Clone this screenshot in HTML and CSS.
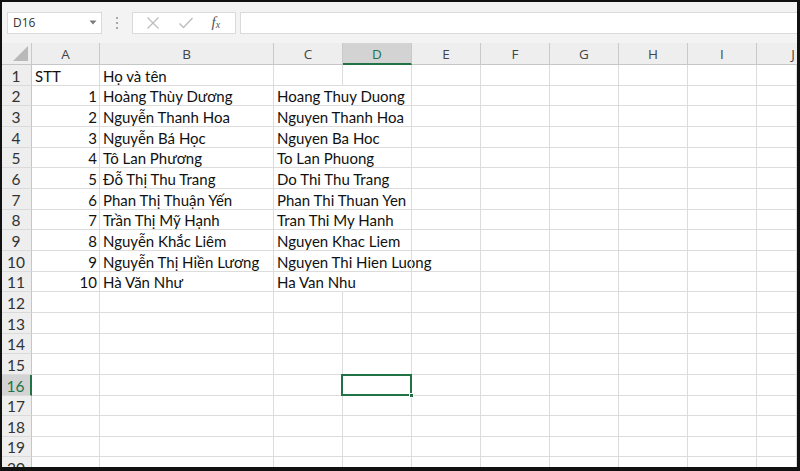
FILE: index.html
```html
<!DOCTYPE html>
<html>
<head>
<meta charset="utf-8">
<link rel="stylesheet" href="styles.css">
</head>
<body>
<div class="frame">
  <div class="fbar">
    <div class="namebox"><span>D16</span><svg class="dd" width="8" height="5" viewBox="0 0 8 5"><path d="M0.5 0.5 L7.5 0.5 L4 4.5 Z" fill="#7a7a7a"/></svg></div>
    <div class="dots"><i></i><i></i><i></i></div>
    <div class="btns">
      <svg width="14" height="14" viewBox="0 0 14 14"><path d="M1.5 1.5 L12.5 12.5 M12.5 1.5 L1.5 12.5" stroke="#bdbdbd" stroke-width="1.3" fill="none"/></svg>
      <svg width="16" height="14" viewBox="0 0 16 14"><path d="M1.5 7.5 L5.5 11.5 L14.5 2" stroke="#bdbdbd" stroke-width="1.4" fill="none"/></svg>
      <span class="fx">f<sub>x</sub></span>
    </div>
    <div class="input"></div>
  </div>
  <div class="grid">
    <div class="ch corner"><svg width="15" height="15" viewBox="0 0 15 15"><path d="M15 0 L15 15 L0 15 Z" fill="#b9b9b9"/></svg></div>
    <div class="ch">A</div><div class="ch">B</div><div class="ch">C</div><div class="ch sel">D</div><div class="ch">E</div><div class="ch">F</div><div class="ch">G</div><div class="ch">H</div><div class="ch">I</div><div class="ch last">J</div>

    <div class="rh">1</div><div class="c">STT</div><div class="c">Họ và tên</div><div class="c"></div><div class="c"></div><div class="c"></div><div class="c"></div><div class="c"></div><div class="c"></div><div class="c"></div><div class="c"></div>
    <div class="rh">2</div><div class="c n">1</div><div class="c">Hoàng Thùy Dương</div><div class="c ov">Hoang Thuy Duong</div><div class="c"></div><div class="c"></div><div class="c"></div><div class="c"></div><div class="c"></div><div class="c"></div><div class="c"></div>
    <div class="rh">3</div><div class="c n">2</div><div class="c">Nguyễn Thanh Hoa</div><div class="c ov">Nguyen Thanh Hoa</div><div class="c"></div><div class="c"></div><div class="c"></div><div class="c"></div><div class="c"></div><div class="c"></div><div class="c"></div>
    <div class="rh">4</div><div class="c n">3</div><div class="c">Nguyễn Bá Học</div><div class="c ov">Nguyen Ba Hoc</div><div class="c"></div><div class="c"></div><div class="c"></div><div class="c"></div><div class="c"></div><div class="c"></div><div class="c"></div>
    <div class="rh">5</div><div class="c n">4</div><div class="c">Tô Lan Phương</div><div class="c ov">To Lan Phuong</div><div class="c"></div><div class="c"></div><div class="c"></div><div class="c"></div><div class="c"></div><div class="c"></div><div class="c"></div>
    <div class="rh">6</div><div class="c n">5</div><div class="c">Đỗ Thị Thu Trang</div><div class="c ov">Do Thi Thu Trang</div><div class="c"></div><div class="c"></div><div class="c"></div><div class="c"></div><div class="c"></div><div class="c"></div><div class="c"></div>
    <div class="rh">7</div><div class="c n">6</div><div class="c">Phan Thị Thuận Yến</div><div class="c ov">Phan Thi Thuan Yen</div><div class="c"></div><div class="c"></div><div class="c"></div><div class="c"></div><div class="c"></div><div class="c"></div><div class="c"></div>
    <div class="rh">8</div><div class="c n">7</div><div class="c">Trần Thị Mỹ Hạnh</div><div class="c ov">Tran Thi My Hanh</div><div class="c"></div><div class="c"></div><div class="c"></div><div class="c"></div><div class="c"></div><div class="c"></div><div class="c"></div>
    <div class="rh">9</div><div class="c n">8</div><div class="c">Nguyễn Khắc Liêm</div><div class="c ov">Nguyen Khac Liem</div><div class="c"></div><div class="c"></div><div class="c"></div><div class="c"></div><div class="c"></div><div class="c"></div><div class="c"></div>
    <div class="rh">10</div><div class="c n">9</div><div class="c">Nguyễn Thị Hiền Lương</div><div class="c ov">Nguyen Thi Hien Luong</div><div class="c"></div><div class="c"></div><div class="c"></div><div class="c"></div><div class="c"></div><div class="c"></div><div class="c"></div>
    <div class="rh">11</div><div class="c n">10</div><div class="c">Hà Văn Như</div><div class="c ov">Ha Van Nhu</div><div class="c"></div><div class="c"></div><div class="c"></div><div class="c"></div><div class="c"></div><div class="c"></div><div class="c"></div>
    <div class="rh">12</div><div class="c"></div><div class="c"></div><div class="c"></div><div class="c"></div><div class="c"></div><div class="c"></div><div class="c"></div><div class="c"></div><div class="c"></div><div class="c"></div>
    <div class="rh">13</div><div class="c"></div><div class="c"></div><div class="c"></div><div class="c"></div><div class="c"></div><div class="c"></div><div class="c"></div><div class="c"></div><div class="c"></div><div class="c"></div>
    <div class="rh">14</div><div class="c"></div><div class="c"></div><div class="c"></div><div class="c"></div><div class="c"></div><div class="c"></div><div class="c"></div><div class="c"></div><div class="c"></div><div class="c"></div>
    <div class="rh">15</div><div class="c"></div><div class="c"></div><div class="c"></div><div class="c"></div><div class="c"></div><div class="c"></div><div class="c"></div><div class="c"></div><div class="c"></div><div class="c"></div>
    <div class="rh sel">16</div><div class="c"></div><div class="c"></div><div class="c"></div><div class="c active"></div><div class="c"></div><div class="c"></div><div class="c"></div><div class="c"></div><div class="c"></div><div class="c"></div>
    <div class="rh">17</div><div class="c"></div><div class="c"></div><div class="c"></div><div class="c"></div><div class="c"></div><div class="c"></div><div class="c"></div><div class="c"></div><div class="c"></div><div class="c"></div>
    <div class="rh">18</div><div class="c"></div><div class="c"></div><div class="c"></div><div class="c"></div><div class="c"></div><div class="c"></div><div class="c"></div><div class="c"></div><div class="c"></div><div class="c"></div>
    <div class="rh">19</div><div class="c"></div><div class="c"></div><div class="c"></div><div class="c"></div><div class="c"></div><div class="c"></div><div class="c"></div><div class="c"></div><div class="c"></div><div class="c"></div>
    <div class="rh">20</div><div class="c"></div><div class="c"></div><div class="c"></div><div class="c"></div><div class="c"></div><div class="c"></div><div class="c"></div><div class="c"></div><div class="c"></div><div class="c"></div>
  </div>
</div>
</body>
</html>
```
FILE: styles.css
```css
html, body {
  margin: 0;
  padding: 0;
  background: #ffffff;
}
.frame {
  width: 800px;
  height: 471px;
  box-sizing: border-box;
  border-style: solid;
  border-color: #111111;
  border-width: 2px 3px 4px 2px;
  overflow: hidden;
  background: #ffffff;
}
.fbar {
  height: 41px;
  background: #f3f3f3;
  display: flex;
  align-items: center;
  padding: 0 0 0 5px;
  box-sizing: border-box;
}
.namebox {
  width: 95px;
  height: 22px;
  box-sizing: border-box;
  background: #ffffff;
  border: 1px solid #dadada;
  display: flex;
  align-items: center;
  justify-content: space-between;
  padding: 0 4px 0 5px;
  font-family: "Open Sans", "Noto Sans", sans-serif;
  font-size: 12px;
  color: #333333;
}
.dots {
  width: 30px;
  display: flex;
  flex-direction: column;
  align-items: center;
  gap: 3px;
}
.dots i {
  display: block;
  width: 2px;
  height: 2px;
  background: #a8a8a8;
}
.btns {
  width: 104px;
  height: 22px;
  box-sizing: border-box;
  background: #ffffff;
  border: 1px solid #dadada;
  display: flex;
  align-items: center;
  justify-content: space-around;
  padding: 0 6px 0 4px;
}
.fx {
  font-family: "Liberation Serif", serif;
  font-style: italic;
  font-size: 15px;
  color: #555555;
  line-height: 1;
}
.fx sub {
  font-size: 10px;
  vertical-align: -1px;
}
.input {
  flex: 1;
  margin-left: 4px;
  height: 22px;
  box-sizing: border-box;
  background: #ffffff;
  border: 1px solid #dadada;
  border-right: none;
}
.grid {
  display: grid;
  grid-template-columns: 30px 68px 174px 69px 69px 69px 69px 69px 69px 69px 1fr;
  grid-template-rows: 22px;
  grid-auto-rows: 20.67px;
  font-family: "Lato", "Noto Sans", sans-serif;
  font-size: 15px;
  color: #111111;
}
.ch {
  background: #eeeeee;
  border-right: 1px solid #c9c9c9;
  border-bottom: 1px solid #c6c6c6;
  box-sizing: border-box;
  display: flex;
  align-items: center;
  justify-content: center;
  font-family: "Open Sans", "Noto Sans", sans-serif;
  font-size: 13.5px;
  color: #444444;
  padding-top: 1px;
}
.ch.last {
  justify-content: flex-end;
  padding-right: 2px;
  border-right: none;
}
.ch.corner {
  align-items: flex-end;
  justify-content: flex-end;
  padding: 0 3px 3px 0;
}
.ch.sel {
  background: #d3d3d3;
  color: #217346;
  border-bottom: 2px solid #217346;
}
.rh {
  background: #eeeeee;
  border-right: 1px solid #c6c6c6;
  border-bottom: 1px solid #dadada;
  box-sizing: border-box;
  display: flex;
  align-items: flex-end;
  justify-content: center;
  color: #333333;
  font-size: 15.5px;
  line-height: 18px;
  padding-right: 1px;
}
.rh.sel {
  background: #d3d3d3;
  color: #217346;
  border-right: 2px solid #217346;
}
.c {
  border-right: 1px solid #dcdcdc;
  border-bottom: 1px solid #dcdcdc;
  box-sizing: border-box;
  white-space: nowrap;
  display: flex;
  align-items: flex-end;
  padding: 0 3px 0 3px;
  line-height: 18px;
}
.c.n {
  justify-content: flex-end;
  padding-right: 2px;
}
.c.ov {
  border-right-color: transparent;
}
.c.active {
  position: relative;
}
.c.active::before {
  content: "";
  position: absolute;
  left: -2px;
  top: -1px;
  right: -1px;
  bottom: -1px;
  border: 2px solid #217346;
}
.c.active::after {
  content: "";
  position: absolute;
  right: -3px;
  bottom: -3px;
  width: 5px;
  height: 5px;
  background: #217346;
  border: 1px solid #ffffff;
  box-sizing: border-box;
}
```
